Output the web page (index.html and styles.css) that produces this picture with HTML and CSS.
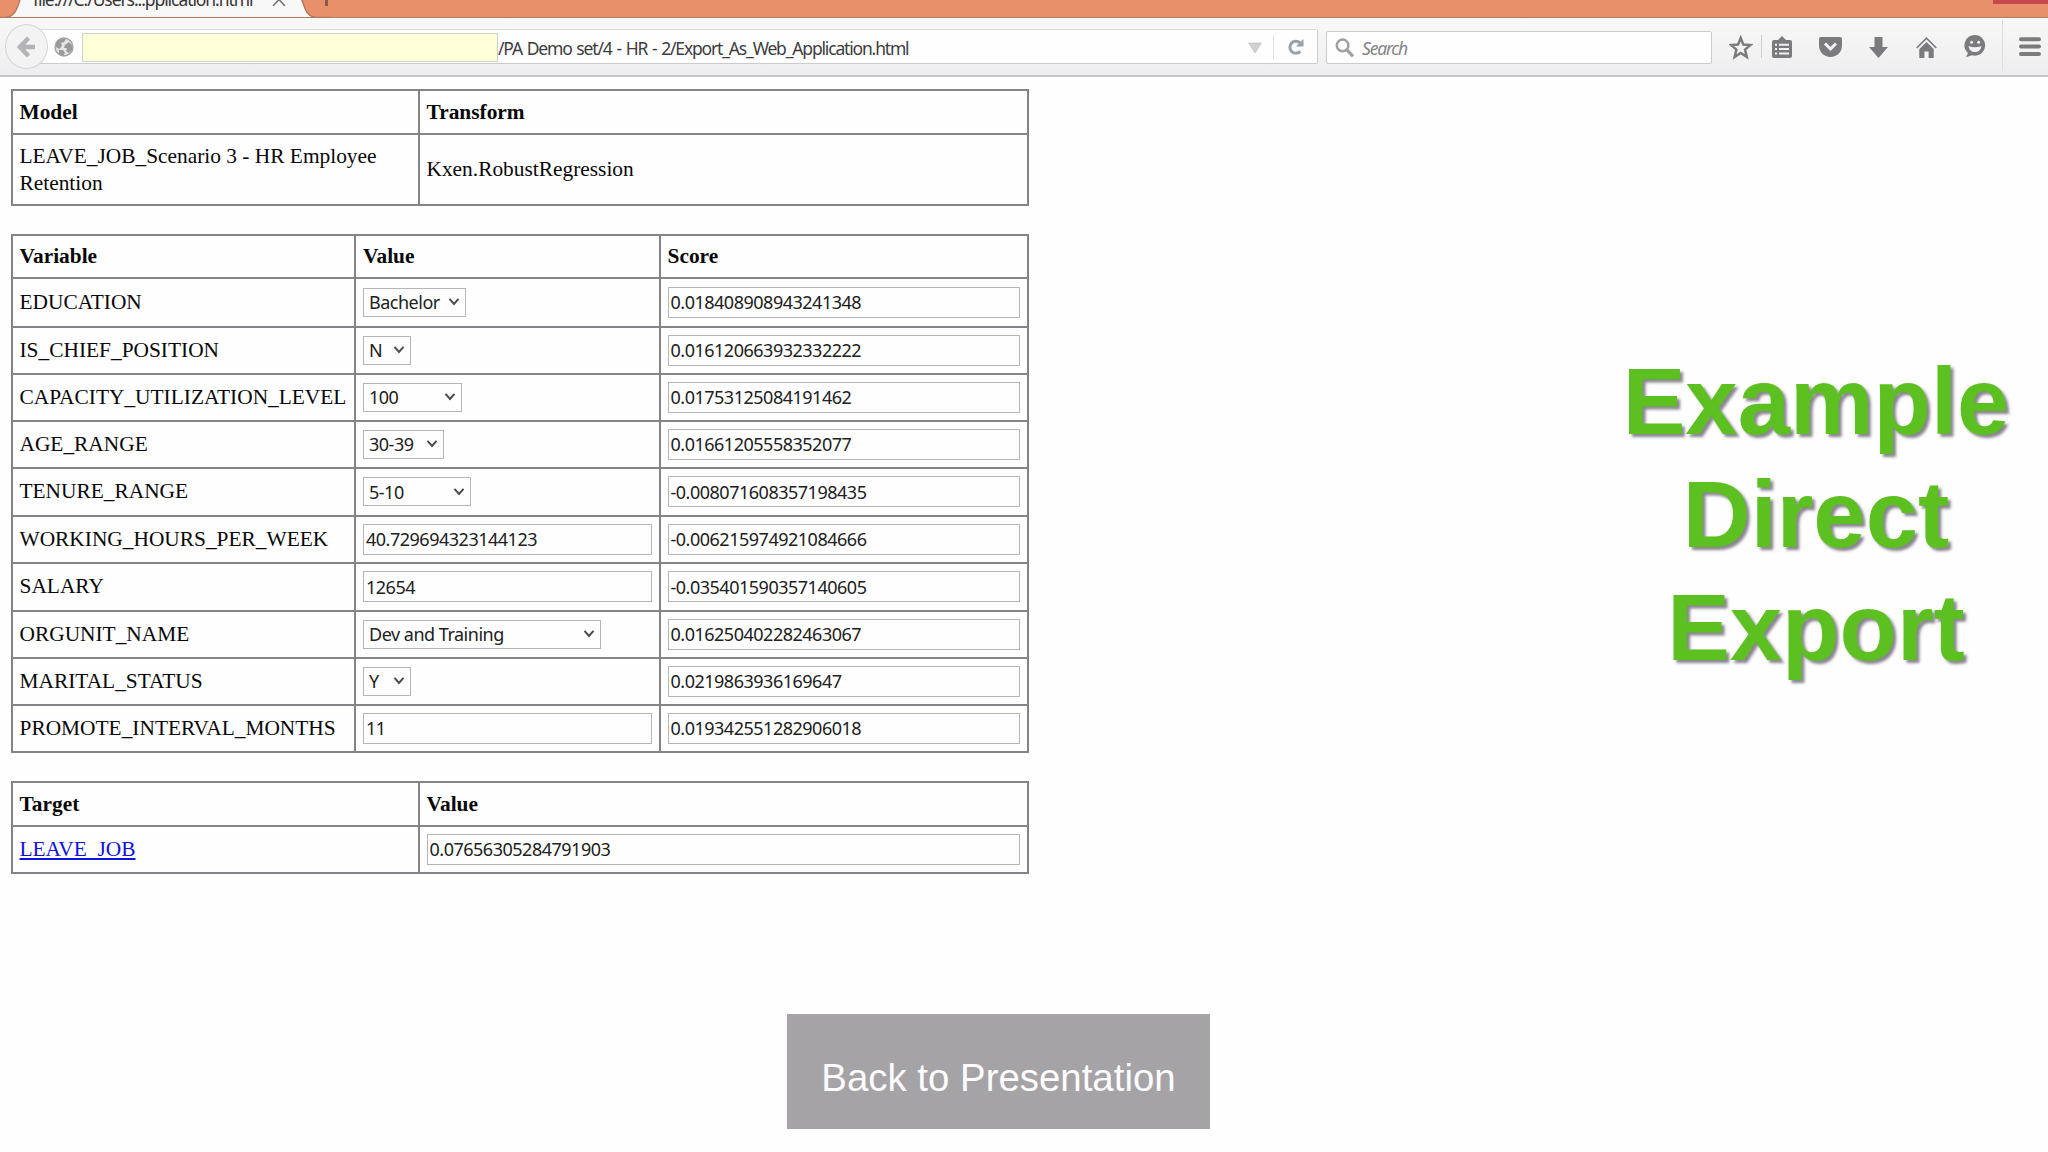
FILE: index.html
```html
<!DOCTYPE html>
<html lang="en">
<head>
<meta charset="utf-8">
<title>Export_As_Web_Application</title>
<link rel="stylesheet" href="styles.css">
</head>
<body>
<header class="chrome">
  <div class="tabstrip">
    <svg class="tabshape" width="330" height="18" viewBox="0 0 330 18">
      <path d="M20 0H301C305 8 306 17 317 18H6C16 17 17 8 20 0Z" fill="#f8f8f8"/>
      <path d="M0 17.3H6C15 16.5 17 9 20 0M302 0C305 8 306 16.5 316 17.3H330" fill="none" stroke="#aa7659" stroke-width="1.3"/>
    </svg>
    <span class="tabtitle">file:///C:/Users...pplication.html</span>
    <svg class="tabclose" width="14" height="6" viewBox="0 0 14 6"><path d="M1 6L8 -1.5M13 6L6 -1.5" stroke="#77777a" stroke-width="1.6" fill="none"/></svg>
    <span class="newtab"></span>
    <span class="winclose"></span>
  </div>
  <nav class="toolbar">
    <div class="back"><svg width="20" height="22" viewBox="0 0 20 22"><path d="M11.5 2L3 11L11.5 20M3.5 11H18" fill="none" stroke="#b4b3b5" stroke-width="4.6"/></svg></div>
    <div class="urlbar">
      <svg class="globe" width="20" height="20" viewBox="0 0 20 20"><circle cx="10" cy="10" r="9" fill="#e4e4e5" stroke="#a2a1a4" stroke-width="1.4"/><path d="M2 6C4 2 8 1 12 2L10 5L7 6L8 9L5 12L2 10ZM11 8L15 5L18 8L18 13L15 16L12 14L13 11L10 11ZM5 13L9 13L11 16L9 19L5 17Z" fill="#99989b"/></svg>
      <span class="mask"></span>
      <span class="url">/PA Demo set/4 - HR - 2/Export_As_Web_Application.html</span>
      <svg class="drop" width="14" height="12" viewBox="0 0 14 12"><path d="M0.5 1H13.5L7 11Z" fill="#d0cfd1" stroke="#bdbcbe" stroke-width="0.6"/></svg>
      <span class="urlsep"></span>
      <svg class="reload" width="18" height="18" viewBox="0 0 18 18"><path d="M13.2 13.4A6 6 0 1 1 13 4.9" fill="none" stroke="#98a0a9" stroke-width="3"/><path d="M16.5 1V8.5H9Z" fill="#98a0a9"/></svg>
    </div>
    <div class="searchbar">
      <svg width="20" height="20" viewBox="0 0 20 20"><circle cx="7.6" cy="7.4" r="5.8" fill="none" stroke="#a09fa2" stroke-width="2.5"/><path d="M12 12L18 18.3" stroke="#a09fa2" stroke-width="3.2"/></svg>
      <span>Search</span>
    </div>
    <div class="tools">
      <svg class="i-star" width="24" height="26" viewBox="0 0 24 26"><path d="M11.7 3L14.3 9.6L21.3 10.1L16 14.6L17.8 22L11.7 18L5.6 22L7.4 14.6L2.2 10.1L9.1 9.6Z" fill="none" stroke="#7b7a7d" stroke-width="2.5"/></svg>
      <span class="toolsep"></span>
      <svg class="i-clip" width="20" height="22" viewBox="0 0 20 22"><path d="M2 4H6L10 0L14 4H18Q20 4 20 6V20Q20 22 18 22H2Q0 22 0 20V6Q0 4 2 4Z" fill="#7b7a7d"/><path d="M3 8.7H5M7 8.7H17M3 13H5M7 13H17M3 17.4H5M7 17.4H17" stroke="#f1f1f2" stroke-width="2"/></svg>
      <svg class="i-pocket" width="23" height="20" viewBox="0 0 23 20"><path d="M2 0H21Q23 0 23 2V8.5C23 15 18 20 11.5 20S0 15 0 8.5V2Q0 0 2 0Z" fill="#7b7a7d"/><path d="M6 6.5L11.5 12L17 6.5" fill="none" stroke="#f3f3f4" stroke-width="3"/></svg>
      <svg class="i-down" width="19" height="21" viewBox="0 0 19 21"><path d="M5.5 0H13.5V10H19L9.5 21L0 10H5.5Z" fill="#7b7a7d"/></svg>
      <svg class="i-home" width="21" height="21" viewBox="0 0 21 21"><path d="M0.7 11L10.5 1.2L20.3 11" fill="none" stroke="#7b7a7d" stroke-width="1.7"/><path d="M3.3 12L10.5 5L17.7 12V21H12.6V14.5H8.4V21H3.3Z" fill="#7b7a7d"/></svg>
      <svg class="i-smile" width="22" height="23" viewBox="0 0 22 23"><path d="M11 0A10.3 10.3 0 1 1 8 20.2L2 22.3L4 18A10.3 10.3 0 0 1 11 0Z" fill="#7b7a7d"/><circle cx="7.6" cy="7.2" r="1.5" fill="#f3f3f4"/><circle cx="14.6" cy="7.2" r="1.5" fill="#f3f3f4"/><path d="M4.5 11Q11 13.5 17.5 11Q16.5 17 11 17T4.5 11Z" fill="#f3f3f4"/></svg>
      <span class="menusep"></span>
      <svg class="i-menu" width="22" height="20" viewBox="0 0 22 20"><path d="M2 2.3H20M2 9.6H20M2 16.9H20" stroke="#7b7a7d" stroke-width="4" stroke-linecap="round"/></svg>
    </div>
  </nav>
</header>
<main class="page">
  <section class="tables">
    <table class="grid model">
      <tr><th>Model</th><th>Transform</th></tr>
      <tr><td>LEAVE_JOB_Scenario 3 - HR Employee<br>Retention</td><td>Kxen.RobustRegression</td></tr>
    </table>
    <table class="grid variables">
      <tr><th>Variable</th><th>Value</th><th>Score</th></tr>
      <tr><td>EDUCATION</td><td><span class="select w-education">Bachelor<svg class="chev" width="12" height="10" viewBox="0 0 12 10"><path d="M1.5 1.8L6 7L10.5 1.8"/></svg></span></td><td><span class="field">0.018408908943241348</span></td></tr>
      <tr><td>IS_CHIEF_POSITION</td><td><span class="select w-flag">N<svg class="chev" width="12" height="10" viewBox="0 0 12 10"><path d="M1.5 1.8L6 7L10.5 1.8"/></svg></span></td><td><span class="field">0.016120663932332222</span></td></tr>
      <tr><td>CAPACITY_UTILIZATION_LEVEL</td><td><span class="select w-capacity">100<svg class="chev" width="12" height="10" viewBox="0 0 12 10"><path d="M1.5 1.8L6 7L10.5 1.8"/></svg></span></td><td><span class="field">0.01753125084191462</span></td></tr>
      <tr><td>AGE_RANGE</td><td><span class="select w-age">30-39<svg class="chev" width="12" height="10" viewBox="0 0 12 10"><path d="M1.5 1.8L6 7L10.5 1.8"/></svg></span></td><td><span class="field">0.01661205558352077</span></td></tr>
      <tr><td>TENURE_RANGE</td><td><span class="select w-tenure">5-10<svg class="chev" width="12" height="10" viewBox="0 0 12 10"><path d="M1.5 1.8L6 7L10.5 1.8"/></svg></span></td><td><span class="field">-0.008071608357198435</span></td></tr>
      <tr><td>WORKING_HOURS_PER_WEEK</td><td><span class="field">40.729694323144123</span></td><td><span class="field">-0.006215974921084666</span></td></tr>
      <tr><td>SALARY</td><td><span class="field">12654</span></td><td><span class="field">-0.035401590357140605</span></td></tr>
      <tr><td>ORGUNIT_NAME</td><td><span class="select w-org">Dev and Training<svg class="chev" width="12" height="10" viewBox="0 0 12 10"><path d="M1.5 1.8L6 7L10.5 1.8"/></svg></span></td><td><span class="field">0.016250402282463067</span></td></tr>
      <tr><td>MARITAL_STATUS</td><td><span class="select w-flag">Y<svg class="chev" width="12" height="10" viewBox="0 0 12 10"><path d="M1.5 1.8L6 7L10.5 1.8"/></svg></span></td><td><span class="field">0.0219863936169647</span></td></tr>
      <tr><td>PROMOTE_INTERVAL_MONTHS</td><td><span class="field">11</span></td><td><span class="field">0.019342551282906018</span></td></tr>
    </table>
    <table class="grid target">
      <tr><th>Target</th><th>Value</th></tr>
      <tr><td><a href="#">LEAVE_JOB</a></td><td><span class="field">0.07656305284791903</span></td></tr>
    </table>
  </section>
  <h1 class="headline">Example<br>Direct<br>Export</h1>
</main>
<footer class="actions"><button class="return">Back to Presentation</button></footer>
</body>
</html>
```
FILE: styles.css
```css
* { box-sizing: border-box; }
body { margin: 0; width: 2048px; height: 1152px; overflow: hidden; background: #fefefe; color: #080808; font-family: "Liberation Serif", serif; }
svg { display: block; flex: none; }

.chrome { height: 78px; font-family: "Noto Sans", sans-serif; }
.tabstrip { position: relative; height: 18px; overflow: hidden; background: #e8906a; border-bottom: 1px solid #b07c60; }
.tabshape, .tabtitle, .tabclose, .newtab, .winclose { position: absolute; }
.tabshape { left: 0; top: 0; }
.tabtitle { left: 33px; top: -13px; font-size: 17.5px; line-height: 24px; letter-spacing: -1.07px; color: #353436; white-space: nowrap; }
.tabclose { left: 272px; top: 0; }
.newtab { left: 325px; top: 0; width: 3px; height: 6px; background: #8a5c48; }
.winclose { left: 1993px; top: 0; width: 55px; height: 4px; background: #c64a50; }

.toolbar { display: flex; height: 59px; padding: 6px 0 0 5px; background: linear-gradient(#f8f8f8, #eeeef0); border-bottom: 2px solid #c6c5c8; }
.back { position: relative; z-index: 1; display: flex; align-items: center; justify-content: center; width: 43px; height: 45px; border: 1.5px solid #d5d4d6; border-radius: 50%; background: #f3f3f4; }
.urlbar { display: flex; align-items: center; width: 1280px; height: 35px; margin: 5px 0 0 -10px; padding-left: 15px; background: #fefefe; border: 1px solid #cbcacd; border-top-color: #dcdbdd; border-radius: 0 2px 2px 0; }
.mask { width: 416px; height: 29px; margin: 2px 0 0 8px; background: #feffd8; border: 1px solid #d3d2c8; }
.url { width: 750px; font-size: 17.5px; letter-spacing: -1.17px; word-spacing: 1.4px; color: #3d3c3f; white-space: nowrap; padding-top: 2px; }
.urlsep { width: 1px; height: 24px; margin: 0 13px 0 11px; background: #dfdee0; }
.drop { margin-top: 2px; }
.searchbar { display: flex; align-items: center; gap: 7px; width: 386px; height: 33px; margin: 7px 0 0 8px; padding-left: 8px; background: #fefefe; border: 1px solid #cbcacd; border-radius: 2px; font-size: 17.5px; font-style: italic; letter-spacing: -1.2px; color: #858487; }
.tools { display: flex; align-items: flex-start; padding-top: 13px; }
.i-star { margin: -2px 0 0 17px; }
.toolsep { width: 1px; height: 23px; margin: -2px 10px 0 8px; background: #cfced0; }
.i-clip { margin-top: -1px; }
.i-pocket { margin-left: 27px; }
.i-down { margin-left: 27px; }
.i-home { margin-left: 28px; }
.i-smile { margin: -2px 0 0 27px; }
.menusep { width: 1px; height: 51px; margin: -17px 16px 0 16px; background: #dddcdf; }

.page { display: flex; height: 936px; padding: 11px 0 0 11px; }
.tables { flex: none; width: 1018px; display: flex; flex-direction: column; gap: 28px; }
.grid { display: grid; width: 1018px; padding: 2px; gap: 2px; background: #858388; font-size: 21.38px; line-height: 27.5px; }
.grid tbody, .grid tr { display: contents; }
.grid th, .grid td { display: flex; align-items: center; min-width: 0; padding: 0 7px 0 6.5px; background: #fefefe; white-space: nowrap; text-align: left; }
.grid th { padding-top: 1px; font-weight: bold; }
.model td { padding-top: 1px; }
.model, .target { grid-template-columns: 405px 607px; }
.model { grid-template-rows: 42px 69px; }
.variables { grid-template-columns: 341px 303px 366px; grid-template-rows: 41px 47px 45px 45px 45px 46px 45px 46px 45px 45px 45px; }
.variables td:nth-child(2), .variables th:nth-child(2) { padding-left: 7px; }
.target { grid-template-rows: 42px 45px; }
.grid a { color: #1010e0; text-decoration: underline; }

.field, .select { display: flex; align-items: center; border: 1px solid #b5b4b8; background: #fefefe; font: 18px/26px "Noto Sans", sans-serif; letter-spacing: -0.49px; color: #202020; }
.field { height: 31px; width: 100%; margin-bottom: 1px; padding-left: 2px; }
.variables td:nth-child(2) .field { width: 289px; }
.select { justify-content: space-between; height: 29px; margin-bottom: 1px; padding: 0 5px; }
.chev path { fill: none; stroke: #4c4b4e; stroke-width: 2; }
.w-education { width: 103px; }
.w-flag { width: 48px; }
.w-capacity { width: 99px; }
.w-age { width: 81px; }
.w-tenure { width: 108px; }
.w-org { width: 238px; }

.headline { flex: none; width: 440px; margin: 257px 0 0 567px; font: bold 94px/112.8px "Liberation Sans", sans-serif; text-align: center; color: #5dc021; text-shadow: 3px 3px 3px rgba(60, 50, 70, .6); }
.actions { padding-left: 787px; }
.return { display: block; width: 423px; height: 115px; padding: 12px 0 0; border: 0; background: #a5a3a6; color: #fdfcfe; font: 38.4px/44px "Liberation Sans", sans-serif; text-align: center; }
```
